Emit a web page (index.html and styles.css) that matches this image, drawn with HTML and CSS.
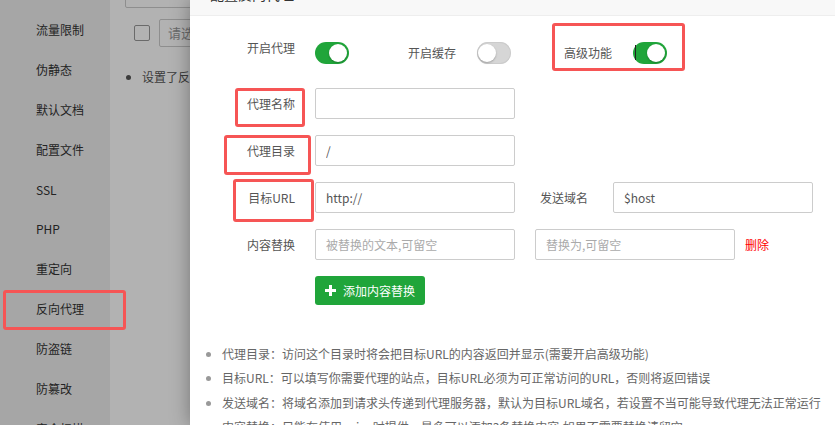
FILE: index.html
```html
<!DOCTYPE html>
<html lang="zh-CN">
<head>
<meta charset="utf-8">
<title>配置反向代理</title>
<link rel="stylesheet" href="styles.css">
</head>
<body>
<div class="page">
  <ul class="sidebar">
    <li>流量限制</li>
    <li>伪静态</li>
    <li>默认文档</li>
    <li>配置文件</li>
    <li>SSL</li>
    <li>PHP</li>
    <li>重定向</li>
    <li>反向代理</li>
    <li>防盗链</li>
    <li>防篡改</li>
    <li>安全扫描</li>
  </ul>
  <div class="main">
    <div class="top-input"></div>
    <div class="tools">
      <span class="checkbox"></span>
      <span class="select">请选择批量操作</span>
    </div>
    <ul class="bg-notes">
      <li>设置了反向代理后，该站点将无法使用其它功能</li>
    </ul>
  </div>
</div>

<div class="mask"></div>

<div class="modal">
  <div class="modal-head">配置反向代理</div>
  <div class="modal-body">
    <div class="switch-row">
      <span class="label label-raised">开启代理</span>
      <span class="sw on"><i></i></span>
      <span class="label-inline gap-a">开启缓存</span>
      <span class="sw off"><i></i></span>
      <span class="label-inline gap-b">高级功能</span>
      <span class="sw on cursor"><i></i></span>
    </div>

    <div class="row">
      <span class="label">代理名称</span>
      <input class="field" type="text" value="">
    </div>
    <div class="row">
      <span class="label">代理目录</span>
      <input class="field" type="text" value="/">
    </div>
    <div class="row">
      <span class="label">目标URL</span>
      <input class="field" type="text" value="http://">
      <span class="label-inline side-label">发送域名</span>
      <input class="field" type="text" value="$host">
    </div>
    <div class="row">
      <span class="label">内容替换</span>
      <input class="field" type="text" placeholder="被替换的文本,可留空">
      <input class="field field-second" type="text" placeholder="替换为,可留空">
      <span class="del">删除</span>
    </div>
    <div class="row">
      <span class="label"></span>
      <button class="btn-add" type="button">
        <svg width="11" height="11" viewBox="0 0 11 11" aria-hidden="true"><path d="M4 0h3v4h4v3H7v4H4V7H0V4h4z" fill="#fff"/></svg>
        添加内容替换
      </button>
    </div>

    <ul class="notes">
      <li>代理目录：访问这个目录时将会把目标URL的内容返回并显示(需要开启高级功能)</li>
      <li>目标URL：可以填写你需要代理的站点，目标URL必须为可正常访问的URL，否则将返回错误</li>
      <li>发送域名：将域名添加到请求头传递到代理服务器，默认为目标URL域名，若设置不当可能导致代理无法正常运行</li>
      <li>内容替换：只能在使用nginx时提供，最多可以添加3条替换内容,如果不需要替换请留空</li>
    </ul>
  </div>
</div>

<div class="mark mark-adv"></div>
<div class="mark mark-name"></div>
<div class="mark mark-dir"></div>
<div class="mark mark-url"></div>
<div class="mark mark-side"></div>
</body>
</html>
```

FILE: styles.css
```css
* { box-sizing: border-box; }

html, body {
  margin: 0;
  padding: 0;
}

body {
  width: 835px;
  height: 425px;
  overflow: hidden;
  position: relative;
  background: #fff;
  font-family: "Noto Sans CJK SC", "Noto Sans", sans-serif;
  font-size: 12px;
  color: #555;
}

ul { margin: 0; padding: 0; }

/* ---------- underlying page ---------- */
.page {
  display: flex;
  height: 425px;
  overflow: hidden;
}

.sidebar {
  width: 110px;
  flex: none;
  background: #eee;
  list-style: none;
  padding-top: 10px;
}

.sidebar li {
  height: 39.9px;
  line-height: 40px;
  padding-left: 36px;
  color: #333;
  font-size: 12px;
}

.main {
  flex: 1;
  padding-left: 15px;
}

.top-input {
  margin-top: -22px;
  width: 300px;
  height: 30px;
  border: 1px solid #ccc;
  border-radius: 2px;
}

.tools {
  display: flex;
  align-items: center;
  gap: 9px;
  margin-top: 11px;
  padding-left: 9px;
}

.checkbox {
  width: 16px;
  height: 16px;
  border: 1px solid #999;
  border-radius: 2px;
}

.select {
  height: 28px;
  width: 150px;
  border: 1px solid #ccc;
  border-radius: 2px;
  line-height: 26px;
  padding-left: 8px;
  color: #999;
  font-size: 13px;
}

.bg-notes {
  margin-top: 18px;
  padding-left: 17px;
  color: #555;
  font-size: 12px;
  line-height: 24px;
}

.mask {
  position: absolute;
  inset: 0;
  background: rgba(0, 0, 0, 0.3);
}

/* ---------- modal ---------- */
.modal {
  position: absolute;
  left: 190px;
  top: 0;
  width: 645px;
  height: 425px;
  overflow: hidden;
  background: #fff;
  box-shadow: 0 0 18px rgba(0, 0, 0, 0.35);
}

.modal-head {
  height: 43px;
  margin-top: -27px;
  line-height: 42px;
  padding-left: 20px;
  background: #f8f8f8;
  border-bottom: 1px solid #eee;
  color: #333;
  font-size: 14px;
}

.modal-body {
  padding-top: 26px;
}

.label {
  width: 105px;
  flex: none;
  text-align: right;
  margin-right: 20px;
  color: #555;
  font-size: 12px;
  line-height: 16px;
}

.label-raised {
  padding-bottom: 10px;
}

.label-inline {
  flex: none;
  color: #555;
  font-size: 12px;
  line-height: 16px;
  margin-right: 21px;
}

.gap-a { margin-left: 59px; }
.gap-b { margin-left: 53px; }

.switch-row {
  display: flex;
  align-items: center;
  height: 22px;
  margin-bottom: 24px;
}

.sw {
  position: relative;
  flex: none;
  width: 34px;
  height: 22px;
  border-radius: 11px;
}

.sw i {
  position: absolute;
  top: 2px;
  width: 18px;
  height: 18px;
  border-radius: 50%;
  background: #fff;
  box-shadow: 0 1px 2px rgba(0, 0, 0, 0.25);
}

.sw.on { background: #20a53a; }
.sw.on i { right: 2px; }

.sw.off {
  background: #d6d6d6;
  box-shadow: inset 0 0 0 1px #ccc;
}
.sw.off i { left: 1px; top: 2px; }

.sw.cursor::before {
  content: "";
  position: absolute;
  left: 2px;
  top: 3px;
  width: 1px;
  height: 15px;
  background: #222;
}

.row {
  display: flex;
  align-items: center;
  margin-bottom: 16px;
}

.field {
  width: 200px;
  height: 31px;
  border: 1px solid #ccc;
  border-radius: 2px;
  padding: 0 10px;
  font-family: inherit;
  font-size: 12px;
  color: #555;
  outline: none;
  background: #fff;
}

.field::placeholder { color: #aaa; }

.side-label {
  margin-left: 25px;
  margin-right: 25px;
}

.field-second { margin-left: 20px; }

.del {
  margin-left: 10px;
  color: #f00;
  font-size: 12px;
}

.btn-add {
  display: flex;
  align-items: center;
  gap: 7px;
  height: 29px;
  width: 110px;
  padding: 0 0 0 10px;
  border: 0;
  border-radius: 3px;
  background: #20a53a;
  color: #fff;
  font-family: inherit;
  font-size: 12px;
}

.notes {
  margin-top: 37px;
  padding-left: 32px;
  color: #666;
  font-size: 12px;
  line-height: 24.4px;
}

.notes li::marker { color: #999; }

/* ---------- annotation boxes ---------- */
.mark {
  position: absolute;
  border: 3px solid #f65555;
  border-radius: 3px;
}

.mark-adv  { left: 552px; top: 23px;  width: 133px; height: 48px; }
.mark-name { left: 235px; top: 88px;  width: 70px;  height: 39px; }
.mark-dir  { left: 224px; top: 135px; width: 87px;  height: 40px; }
.mark-url  { left: 233px; top: 179px; width: 81px;  height: 43px; }
.mark-side { left: 3px;   top: 290px; width: 123px; height: 40px; }
```
